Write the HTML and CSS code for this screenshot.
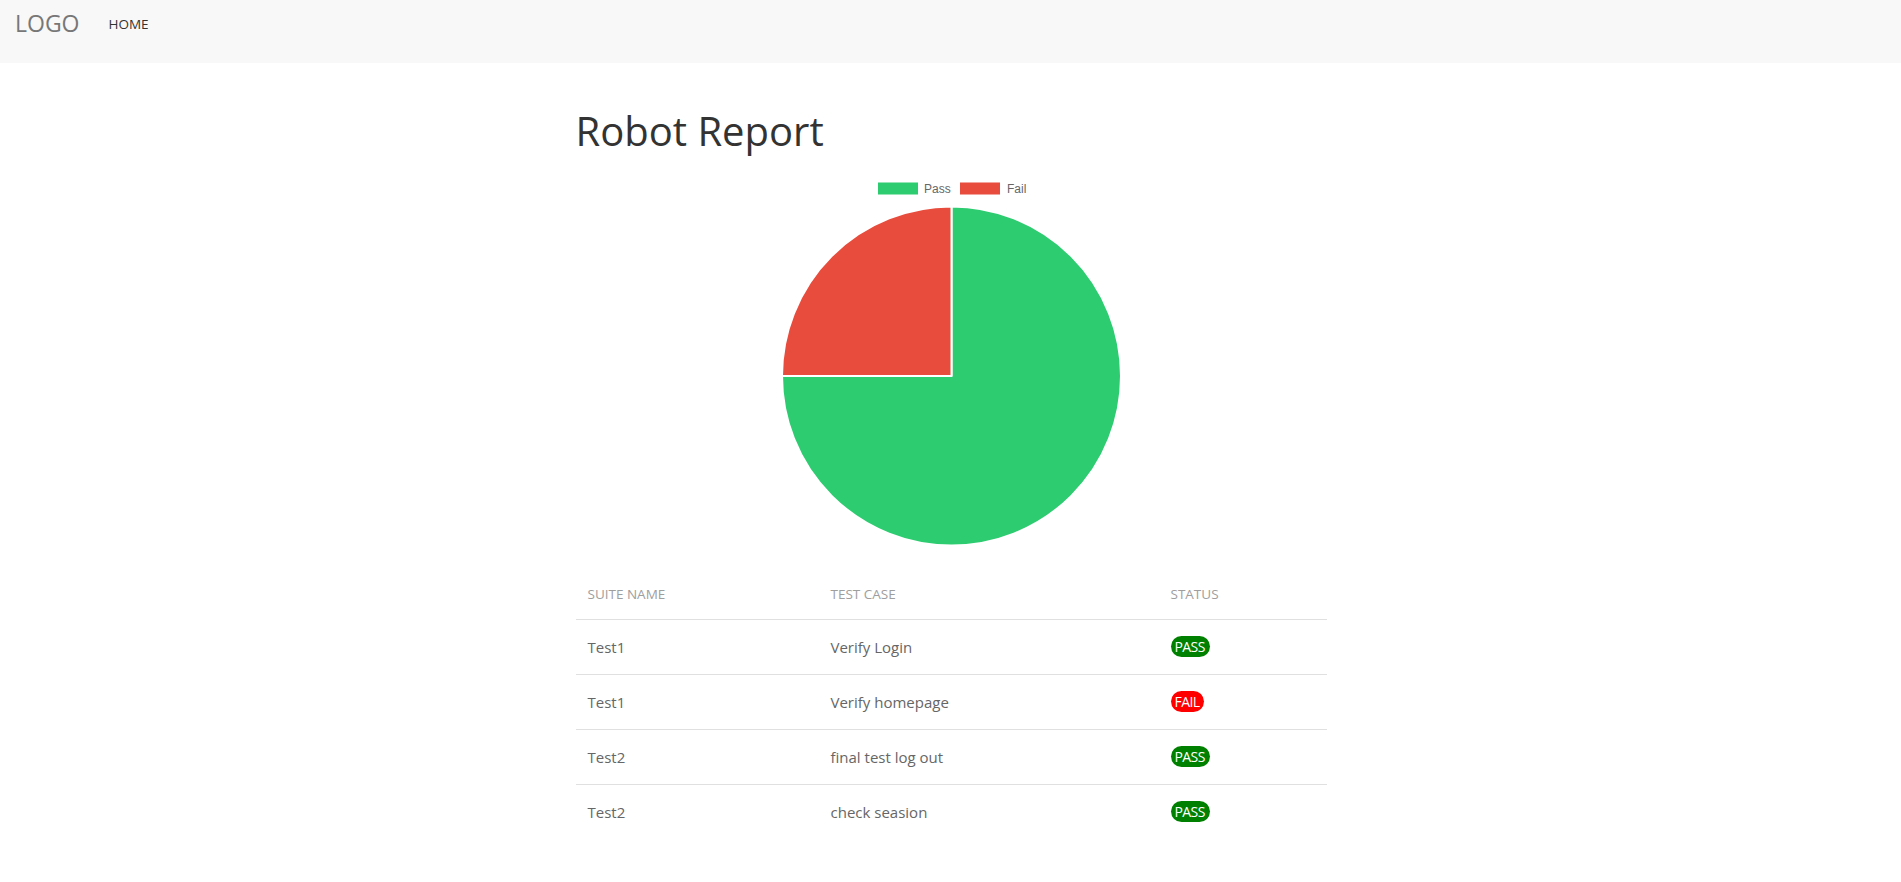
FILE: index.html
```html
<!DOCTYPE html>
<html lang="en">
<head>
<meta charset="utf-8">
<title>Robot Report</title>
<link rel="stylesheet" href="styles.css">
</head>
<body>
<nav class="navbar">
  <a class="brand" href="#">LOGO</a>
  <a class="nav-link" href="#">HOME</a>
</nav>
<main class="container">
  <h1 class="title">Robot Report</h1>
  <div class="chart">
    <svg class="chart-svg" width="751" height="400" viewBox="0 0 751 400">
      <rect x="302" y="12.5" width="40" height="12" fill="#2ecc71"/>
      <text class="legend-text" x="348" y="22.5">Pass</text>
      <rect x="384" y="12.5" width="40" height="12" fill="#e74c3c"/>
      <text class="legend-text" x="431" y="22.5">Fail</text>
      <path d="M375.5 206 L375.5 36.5 A169.5 169.5 0 1 1 206 206 Z" fill="#2ecc71" stroke="#ffffff" stroke-width="2" stroke-linejoin="round"/>
      <path d="M375.5 206 L206 206 A169.5 169.5 0 0 1 375.5 36.5 Z" fill="#e74c3c" stroke="#ffffff" stroke-width="2" stroke-linejoin="round"/>
    </svg>
  </div>
  <table class="report">
    <colgroup>
      <col class="c1"><col class="c2"><col class="c3">
    </colgroup>
    <thead>
      <tr><th>Suite Name</th><th>Test Case</th><th>Status</th></tr>
    </thead>
    <tbody>
      <tr><td>Test1</td><td>Verify Login</td><td><span class="badge pass">PASS</span></td></tr>
      <tr><td>Test1</td><td>Verify homepage</td><td><span class="badge fail">FAIL</span></td></tr>
      <tr><td>Test2</td><td>final test log out</td><td><span class="badge pass">PASS</span></td></tr>
      <tr><td>Test2</td><td>check seasion</td><td><span class="badge pass">PASS</span></td></tr>
    </tbody>
  </table>
</main>
</body>
</html>
```

FILE: styles.css
```css
html, body {
  margin: 0;
  padding: 0;
  background: #ffffff;
}
body {
  font-family: "Open Sans", "Noto Sans", sans-serif;
  color: #333333;
}
.navbar {
  height: 63px;
  background: #f8f8f8;
  display: flex;
  align-items: flex-start;
  box-sizing: border-box;
  padding-left: 15px;
}
.brand {
  font-size: 23px;
  line-height: 23px;
  padding-top: 12px;
  color: #777777;
  text-decoration: none;
}
.nav-link {
  font-size: 13.5px;
  line-height: 14px;
  padding-top: 17px;
  margin-left: 29px;
  color: #333333;
  text-decoration: none;
}
.container {
  width: 751px;
  margin: 0 auto;
  padding-left: 1px;
}
.title {
  font-size: 40px;
  line-height: 48px;
  font-weight: 400;
  color: #333333;
  margin: 44px 0 15px 0;
}
.chart {
  height: 400px;
}
.chart-svg {
  display: block;
}
.legend-text {
  font-family: "Liberation Sans", Arial, sans-serif;
  font-size: 12px;
  fill: #666666;
}
.report {
  width: 751px;
  border-collapse: collapse;
  table-layout: fixed;
}
.c1 { width: 243px; }
.c2 { width: 340px; }
.c3 { width: 168px; }
.report th {
  height: 49px;
  padding: 0 12px;
  text-align: left;
  font-weight: 400;
  font-size: 13.5px;
  text-transform: uppercase;
  color: #9e9e9e;
  border-bottom: 1px solid #e0e0e0;
  vertical-align: middle;
  box-sizing: border-box;
}
.report td {
  height: 55px;
  padding: 0 12px;
  font-size: 15px;
  color: #666666;
  border-bottom: 1px solid #e0e0e0;
  vertical-align: middle;
  box-sizing: border-box;
}
.report tbody tr:last-child td {
  border-bottom: none;
}
.badge {
  display: inline-block;
  font-size: 14px;
  letter-spacing: -0.6px;
  line-height: 21px;
  height: 21px;
  padding: 0 5px 0 4px;
  border-radius: 10.5px;
  color: #ffffff;
}
.badge.pass { background: #008000; }
.badge.fail { background: #ff0000; }
```
